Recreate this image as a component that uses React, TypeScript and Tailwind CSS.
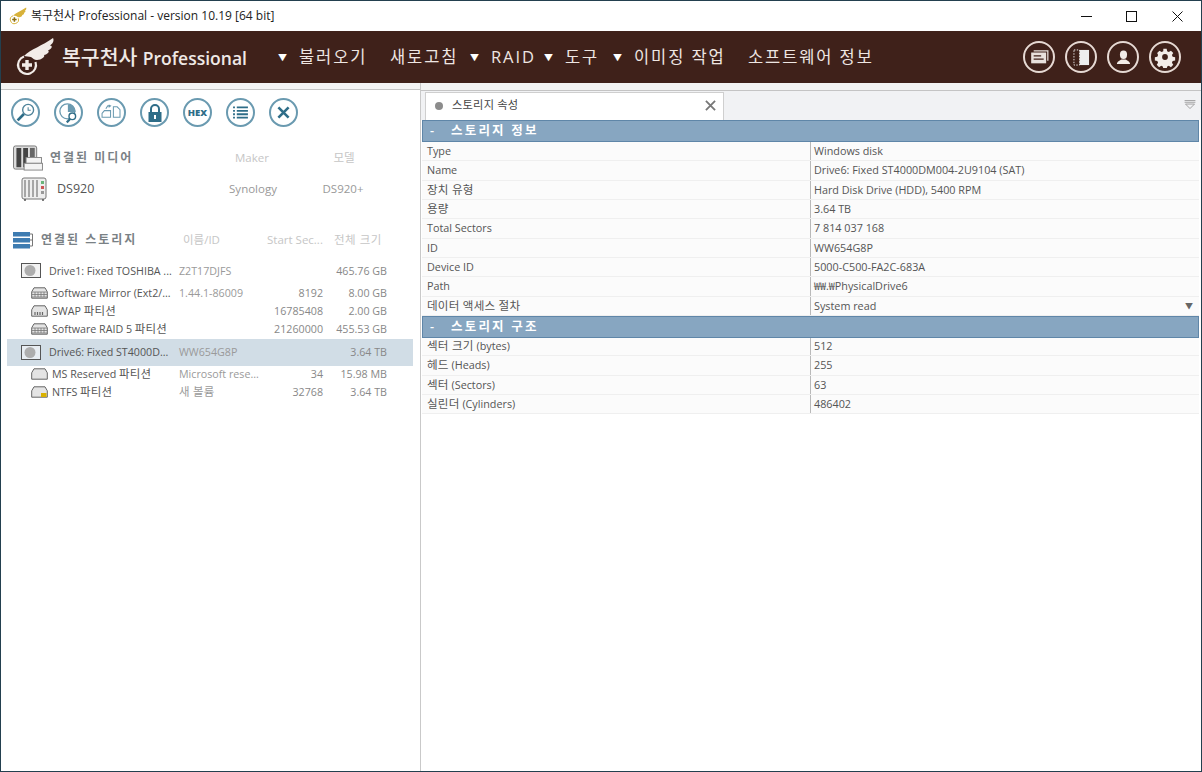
import React from "react";

const FONT = "font-['Open_Sans','Noto_Sans_CJK_KR',sans-serif]";

function T({ children }: { children: string }) {
  const parts = children.split(/([가-힣]+(?: [가-힣]+)*)/);
  return (
    <>
      {parts.map((p, i) =>
        /[가-힣]/.test(p) ? (
          <span key={i} className="text-[1.07em] leading-none tracking-[0.02em]">{p}</span>
        ) : (
          <React.Fragment key={i}>{p}</React.Fragment>
        )
      )}
    </>
  );
}

function Wing({ color, plus, className }: { color: string; plus: string; className?: string }) {
  return (
    <svg viewBox="0 0 40 40" className={className}>
      <path d="M9 19C16 12 27 9 38 1c1.500 3-.5 6-3 7.500 3 0 2 3.500-2 5 2 1-.5 4-4 4.500 1.500 1.500-2.500 5-7 5-3 0-4-2-6-3-2-.5-5-.5-7-1z" fill={color} />
      <path d="M20.500 25A9 9 0 1 1 9 19.500" fill="none" stroke={color} strokeWidth="2.200" />
      <path d="M12 23v10M7 28h10" stroke={plus} strokeWidth="3.400" />
    </svg>
  );
}

function Tool({ children }: { children: React.ReactNode }) {
  return (
    <div className="flex h-[29px] w-[29px] shrink-0 items-center justify-center rounded-full border-2 border-[#6a9ab0] bg-white">
      {children}
    </div>
  );
}

function TopIcon({ children }: { children: React.ReactNode }) {
  return (
    <div className="flex h-[32px] w-[32px] items-center justify-center rounded-full border-2 border-[#e6d9d3]">
      {children}
    </div>
  );
}

function NavItem({ label, arrow, w, ml }: { label: string; arrow?: boolean; w: string; ml: string }) {
  return (
    <div className={`flex items-center ${ml}`}>
      {arrow && <span className="w-[22px] shrink-0 pl-[1px] text-[9px] leading-none text-white">▼</span>}
      <span className={`whitespace-nowrap text-[16.500px] tracking-[1.900px] text-[#eee6e2] ${w}`}>{label}</span>
    </div>
  );
}

function Disk({ selected }: { selected?: boolean }) {
  return (
    <svg viewBox="0 0 20 15" className="h-[15px] w-[20px] shrink-0">
      <rect x="0.5" y="0.5" width="19" height="14" fill={selected ? "#e8edf2" : "#f2f2f2"} stroke="#555" />
      <circle cx="9" cy="7.5" r="5.500" fill="#adadad" />
    </svg>
  );
}

function Part({ kind }: { kind: "grid" | "dots" | "plain" | "ntfs" }) {
  return (
    <svg viewBox="0 0 17 12" className="h-[12px] w-[17px] shrink-0">
      <path d="M3 .8h11l2.300 4v6.400H.7V4.800z" fill="#e4e4e4" stroke="#666" />
      {kind === "grid" && <path d="M1 5h15M1 7.500h15M1 10h15M4 5v5M7 5v5M10 5v5M13 5v5" stroke="#777" strokeWidth=".8" />}
      {kind === "dots" && <path d="M4 7v3M6.500 7v3M9 7v3M11.500 7v3" stroke="#666" strokeWidth="1.200" />}
      {kind === "ntfs" && <rect x="10" y="7" width="5.500" height="4" fill="#d9b100" />}
    </svg>
  );
}

type TreeRow = { icon: React.ReactNode; name: string; id: string; start: string; size: string; h: string; big?: boolean; sel?: boolean };

const tree: TreeRow[] = [
  { icon: <Disk />, name: "Drive1: Fixed TOSHIBA ...", id: "Z2T17DJFS", start: "", size: "465.76 GB", h: "h-[26px]", big: true },
  { icon: <Part kind="grid" />, name: "Software Mirror (Ext2/...", id: "1.44.1-86009", start: "8192", size: "8.00 GB", h: "h-[18px]" },
  { icon: <Part kind="dots" />, name: "SWAP 파티션", id: "", start: "16785408", size: "2.00 GB", h: "h-[18px]" },
  { icon: <Part kind="grid" />, name: "Software RAID 5 파티션", id: "", start: "21260000", size: "455.53 GB", h: "h-[19px] pb-[1px]" },
  { icon: <Disk selected />, name: "Drive6: Fixed ST4000D...", id: "WW654G8P", start: "", size: "3.64 TB", h: "h-[27px]", big: true, sel: true },
  { icon: <Part kind="plain" />, name: "MS Reserved 파티션", id: "Microsoft rese...", start: "34", size: "15.98 MB", h: "h-[17px]" },
  { icon: <Part kind="ntfs" />, name: "NTFS 파티션", id: "새 볼륨", start: "32768", size: "3.64 TB", h: "h-[18px]" },
];

const info: [string, string, boolean?][] = [
  ["Type", "Windows disk"],
  ["Name", "Drive6: Fixed ST4000DM004-2U9104 (SAT)"],
  ["장치 유형", "Hard Disk Drive (HDD), 5400 RPM"],
  ["용량", "3.64 TB"],
  ["Total Sectors", "7 814 037 168"],
  ["ID", "WW654G8P"],
  ["Device ID", "5000-C500-FA2C-683A"],
  ["Path", "₩₩.₩PhysicalDrive6"],
  ["데이터 액세스 절차", "System read", true],
];

const geom: [string, string][] = [
  ["섹터 크기 (bytes)", "512"],
  ["헤드 (Heads)", "255"],
  ["섹터 (Sectors)", "63"],
  ["실린더 (Cylinders)", "486402"],
];

function PropRow({ k, v, menu }: { k: string; v: string; menu?: boolean }) {
  return (
    <div className="flex h-[19.33px] items-center border-b border-[#efefef] bg-[#fbfbfb] text-[10.800px] text-[#555]">
      <div className="flex h-full w-[388px] shrink-0 items-center pl-[5px]"><span><T>{k}</T></span></div>
      <div className="flex h-full flex-1 items-center border-l border-[#b9b9b9] pl-[3px] pr-[6px]">
        <span className="flex-1">{v}</span>
        {menu && <span className="text-[8px] text-[#666]">▼</span>}
      </div>
    </div>
  );
}

function Section({ title }: { title: string }) {
  return (
    <div className="relative z-10 flex h-[22px] items-center border border-[#5f86a8] bg-[#87a6c1] pl-[7px] text-[12.500px] font-semibold tracking-[2.200px] text-white">
      <span className="mr-[15px] w-[6px]">-</span>
      {title}
    </div>
  );
}

export default function App() {
  return (
    <div className={`${FONT} flex h-[772px] w-[1202px] flex-col overflow-hidden border border-[#23404f] bg-white`}>
      {/* title bar */}
      <div className="flex h-[30px] shrink-0 items-center bg-white pl-[8px]">
        <Wing color="#d8b23a" plus="#8a6d10" className="h-[18px] w-[18px]" />
        <span className="ml-[4px] text-[12px] text-[#222]">복구천사 Professional - version 10.19 [64 bit]</span>
        <div className="ml-auto flex items-center">
          <svg viewBox="0 0 11 11" className="h-[11px] w-[11px]"><path d="M0 5.500h11" stroke="#111" strokeWidth="1" /></svg>
          <svg viewBox="0 0 11 11" className="ml-[34px] h-[11px] w-[11px]"><rect x=".5" y=".5" width="10" height="10" fill="none" stroke="#111" /></svg>
          <svg viewBox="0 0 11 11" className="ml-[35px] mr-[18px] h-[11px] w-[11px]"><path d="M.5.500l10 10M10.500.500l-10 10" stroke="#111" /></svg>
        </div>
      </div>

      {/* header */}
      <div className="flex h-[52px] shrink-0 items-center bg-[#3f211a] pl-[14px]">
        <Wing color="#f2ece8" plus="#f2ece8" className="h-[40px] w-[40px]" />
        <span className="ml-[7px] w-[183px] whitespace-nowrap text-[20.500px] font-medium leading-none text-[#efe9e6]">
          복구천사 <span className="text-[17.500px] font-semibold">Professional</span>
        </span>
        <NavItem arrow label="불러오기" w="w-[67px]" ml="ml-[32px]" />
        <NavItem label="새로고침" w="w-[76px]" ml="ml-[24px]" />
        <NavItem arrow label="RAID" w="w-[39px]" ml="ml-[3px]" />
        <NavItem arrow label="도구" w="w-[32px]" ml="ml-[13px]" />
        <NavItem arrow label="이미징 작업" w="w-[90px]" ml="ml-[15px]" />
        <NavItem label="소프트웨어 정보" w="w-[125px]" ml="ml-[24px]" />
        <div className="ml-auto mr-[20px] flex gap-[10px]">
          <TopIcon>
            <svg viewBox="0 0 22 18" className="h-[15px] w-[19px]"><path d="M4 1h17v12" fill="none" stroke="#e8e0dc" strokeWidth="1.500" /><rect x="1" y="3" width="18" height="13" fill="#e8e0dc" /><path d="M4 7h9M4 11h12" stroke="#3f211a" strokeWidth="1.500" /></svg>
          </TopIcon>
          <TopIcon>
            <svg viewBox="0 0 18 18" className="h-[17px] w-[17px]"><rect x="1" y="1" width="6" height="16" fill="none" stroke="#eee" strokeDasharray="1.500 1.500" /><rect x="7" y="1" width="10" height="16" fill="#eee" /></svg>
          </TopIcon>
          <TopIcon>
            <svg viewBox="0 0 16 16" className="h-[15px] w-[15px]"><ellipse cx="8" cy="5" rx="3.800" ry="4.500" fill="#f2ece8" /><path d="M1 15c0-3 3-4 5-5h4c2 1 5 2 5 5z" fill="#f2ece8" /></svg>
          </TopIcon>
          <TopIcon>
            <svg viewBox="0 0 24 24" className="h-[22px] w-[22px]"><path fill="#f2ece8" fillRule="evenodd" d="M10 2h4l.6 3 2 .9 2.600-1.600 2.800 2.800-1.600 2.600.9 2 3 .6v4l-3 .6-.9 2 1.600 2.600-2.800 2.800-2.600-1.600-2 .9-.6 3h-4l-.6-3-2-.9-2.600 1.600-2.800-2.800 1.600-2.600-.9-2-3-.6v-4l3-.6.9-2L2.500 7.100l2.800-2.800 2.600 1.600 2-.9zM12 8.500a3.500 3.500 0 1 0 0 7 3.500 3.500 0 0 0 0-7z" transform="translate(1.200 1.200) scale(.9)" /></svg>
          </TopIcon>
        </div>
      </div>

      <div className="flex min-h-0 flex-1">
        {/* left panel */}
        <div className="flex w-[420px] shrink-0 flex-col border-r border-[#c9c9c9] bg-white">
          <div className="h-[7px] shrink-0 border-b border-[#c4c4c4] bg-[#f3f3f3]" />
          <div className="flex shrink-0 gap-[14px] pl-[10px] pt-[8px]">
            <Tool>
              <svg viewBox="0 0 20 20" className="h-[21px] w-[21px]"><circle cx="12.500" cy="7.500" r="5.200" fill="none" stroke="#4e8299" strokeWidth="1.300" /><path d="M8.500 11.500L2.500 17.500" stroke="#2e6d88" strokeWidth="2.600" /><path d="M12.500 5v2.800h2.500" fill="none" stroke="#4e8299" /></svg>
            </Tool>
            <Tool>
              <svg viewBox="0 0 20 20" className="h-[22px] w-[22px]"><circle cx="8.500" cy="8.500" r="6.800" fill="none" stroke="#6a9ab0" strokeWidth="1.200" /><path d="M9 2a7 7 0 0 1 7 7H9z" fill="#6a9ab0" /><circle cx="13" cy="13" r="3" fill="#fff" stroke="#2e6d88" strokeWidth="1.300" /><path d="M11 15.500L8 18.500" stroke="#2e6d88" strokeWidth="2" /></svg>
            </Tool>
            <Tool>
              <svg viewBox="0 0 22 18" className="h-[17px] w-[21px]"><path d="M1 10l2.500-3H10v7H1zM13 3h4l3 3v8h-7zM5 5l2-3h3M8 1l2 1-2 1.500" fill="none" stroke="#6a9ab0" strokeWidth="1.100" /></svg>
            </Tool>
            <Tool>
              <svg viewBox="0 0 20 20" className="h-[20px] w-[20px]"><path d="M6 9V6a4 4 0 0 1 8 0v3" fill="none" stroke="#2e6d88" strokeWidth="2" /><rect x="3.500" y="9" width="13" height="10" fill="#2e6d88" /><rect x="9" y="12" width="2" height="4" fill="#fff" /></svg>
            </Tool>
            <Tool><span className="text-[9.500px] font-extrabold leading-none text-[#2e6d88]">HEX</span></Tool>
            <Tool>
              <svg viewBox="0 0 16 14" className="h-[13px] w-[15px]"><path d="M0 1.500h2M4 1.500h12M0 5.200h2M4 5.200h12M0 8.900h2M4 8.900h12M0 12.500h2M4 12.500h12" stroke="#2e6d88" strokeWidth="2" /></svg>
            </Tool>
            <Tool>
              <svg viewBox="0 0 14 14" className="h-[13px] w-[13px]"><path d="M1.500 1.500l11 11M12.500 1.500l-11 11" stroke="#2e6d88" strokeWidth="2.800" /></svg>
            </Tool>
          </div>

          {/* media */}
          <div className="mt-[17px] flex h-[28px] shrink-0 items-center pl-[11px] text-[11.500px]">
            <svg viewBox="0 0 32 28" className="h-[27px] w-[32px] shrink-0">
              <rect x="1" y="1" width="24" height="24" rx="2" fill="#ddd" stroke="#777" />
              <path d="M4 3h5v20H4zM11 3h5v20h-5z" fill="#444" /><path d="M18 3h5v10h-5z" fill="#666" />
              <rect x="14" y="13" width="16" height="6" fill="#f3f3f3" stroke="#888" /><rect x="12" y="19" width="19" height="7" fill="#f3f3f3" stroke="#888" />
            </svg>
            <span className="ml-[6px] w-[177px] text-[12px] font-bold tracking-[2px] text-[#7a8185]">연결된 미디어</span>
            <span className="w-[50px] text-center text-[#c6c6c6]">Maker</span>
            <span className="ml-[42px] w-[50px] text-center text-[#c6c6c6]">모델</span>
          </div>
          <div className="mt-[3px] flex h-[28px] shrink-0 items-center pl-[20px] text-[11.500px]">
            <svg viewBox="0 0 26 26" className="h-[26px] w-[26px] shrink-0">
              <rect x="1" y="2" width="24" height="21" rx="2" fill="#eee" stroke="#777" />
              <path d="M4 4v17M8 4v17M12 4v17M16 4v17" stroke="#888" strokeWidth="1.400" />
              <path d="M20 5h3v3h-3z" fill="#6ab47a" /><path d="M20 10h3v3h-3z" fill="#c55" /><path d="M20 15h3v3h-3z" fill="#999" />
              <path d="M4 23v2M22 23v2" stroke="#555" strokeWidth="1.500" />
            </svg>
            <span className="ml-[10px] w-[166px] text-[12.500px] text-[#555]">DS920</span>
            <span className="w-[60px] text-center text-[#999]">Synology</span>
            <span className="ml-[30px] w-[60px] text-center text-[#999]">DS920+</span>
          </div>

          {/* storage */}
          <div className="mt-[25px] flex h-[24px] shrink-0 items-center pl-[11px] text-[11.500px] text-[#c6c6c6]">
            <svg viewBox="0 0 21 18" className="h-[18px] w-[21px] shrink-0">
              <path d="M1 1h17v4.500H1zM1 7h17v4.500H1zM1 13h17v4.500H1z" fill="#3e7cb1" /><path d="M18 3h2.500M18 9h2.500M18 15h2.500M20.500 3v12" stroke="#777" />
            </svg>
            <span className="ml-[8px] w-[142px] text-[12px] font-bold tracking-[2px] text-[#7a8185]">연결된 스토리지</span>
            <span className="w-[84px]">이름/ID</span>
            <span className="w-[67px] whitespace-nowrap">Start Sec...</span>
            <span className="whitespace-nowrap tracking-[0.5px]">전체 크기</span>
          </div>

          {/* tree */}
          <div className="mt-[6px] flex shrink-0 flex-col pl-[6px] pr-[7px] text-[10.700px]">
            {tree.map((r) => (
              <div key={r.name} className={`flex items-center ${r.h} ${r.sel ? "bg-[#d1dde6]" : ""}`}>
                <div className={`flex w-[172px] shrink-0 items-center ${r.big ? "pl-[14px]" : "pl-[24px]"}`}>
                  {r.icon}
                  <span className={`${r.big ? "ml-[8px]" : "ml-[4px]"} whitespace-nowrap text-[#555]`}><T>{r.name}</T></span>
                </div>
                <span className="w-[86px] shrink-0 whitespace-nowrap text-[#9a9a9a]"><T>{r.id}</T></span>
                <span className="w-[58px] shrink-0 text-right text-[#888]">{r.start}</span>
                <span className="w-[64px] shrink-0 text-right text-[#888]">{r.size}</span>
              </div>
            ))}
          </div>
        </div>

        {/* right panel */}
        <div className="flex min-w-0 flex-1 flex-col bg-white">
          <div className="h-[7px] shrink-0 bg-[#f3f3f3]" />
          <div className="flex h-[30px] shrink-0 items-end border-t border-[#c4c4c4] bg-[#f1f2f4] pl-[4px] pr-[2px]">
            <div className="flex h-[28px] w-[299px] items-center border border-b-0 border-[#cfcfcf] bg-white pb-[2px] pl-[9px] pr-[7px] text-[10.500px] text-[#444]">
              <span className="h-[8px] w-[8px] rounded-full bg-[#8c8c8c]" />
              <span className="ml-[9px] flex-1"><T>스토리지 속성</T></span>
              <svg viewBox="0 0 12 12" className="h-[11px] w-[11px]"><path d="M1 1l10 10M11 1L1 11" stroke="#777" strokeWidth="2" /></svg>
            </div>
            <svg viewBox="0 0 12 10" className="mb-[11px] ml-auto mr-[3px] h-[9px] w-[12px]">
              <path d="M0 .5h12M0 2.500h12" stroke="#9a9a9a" /><path d="M1 4.500h10L6 9.500z" fill="none" stroke="#9a9a9a" />
            </svg>
          </div>
          <div className="mr-[2px] ml-[1px] flex flex-col">
            <Section title="스토리지 정보" />
            {info.map(([k, v, m]) => <PropRow key={k} k={k} v={v} menu={m} />)}
            <div className="-mb-[1px]"><Section title="스토리지 구조" /></div>
            {geom.map(([k, v]) => <PropRow key={k} k={k} v={v} />)}
          </div>
        </div>
      </div>
    </div>
  );
}
